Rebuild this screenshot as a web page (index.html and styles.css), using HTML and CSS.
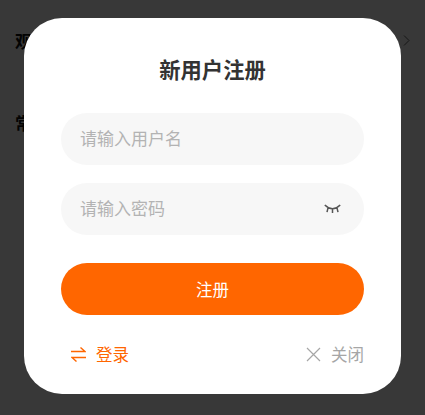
FILE: index.html
```html
<!DOCTYPE html>
<html lang="zh-CN">
<head>
    <meta charset="UTF-8">
    <meta name="viewport" content="width=device-width, initial-scale=1.0">
    <title>新用户注册</title>
    <link rel="stylesheet" href="styles.css">
</head>
<body>
    <div class="page">
        <div class="page-row">
            <span>观看历史</span>
            <svg class="chevron" width="7" height="11" viewBox="0 0 7 11"><path d="M1 .5l5 5-5 5" fill="none" stroke="#666" stroke-width="1"/></svg>
        </div>
        <div class="page-row">
            <span>常用功能</span>
        </div>
    </div>

    <div class="overlay">
        <div class="modal">
            <h1>新用户注册</h1>

            <div class="field">
                <span class="placeholder">请输入用户名</span>
            </div>

            <div class="field">
                <span class="placeholder">请输入密码</span>
                <svg class="eye" width="17" height="10" viewBox="0 0 17 10">
                    <path d="M.8 1Q8.500 8.500 16.200 1M4 3.800L3 8.200M8.500 5V9M13 3.800L14 8.200" fill="none" stroke="#555" stroke-width="1.500"/>
                </svg>
            </div>

            <button class="submit-btn">注册</button>

            <div class="actions">
                <div class="action login">
                    <svg width="15" height="15" viewBox="0 0 15 15">
                        <path d="M0 4.500H14L9.500 .5M15 10.500H1L5.500 14.500" fill="none" stroke="#ff6600" stroke-width="1.400"/>
                    </svg>
                    <span>登录</span>
                </div>
                <div class="action close">
                    <svg width="15" height="15" viewBox="0 0 15 15">
                        <path d="M1 1L14 14M14 1L1 14" fill="none" stroke="#a6a6a6" stroke-width="1.200"/>
                    </svg>
                    <span>关闭</span>
                </div>
            </div>
        </div>
    </div>
</body>
</html>
```

FILE: styles.css
```css
* {
    box-sizing: border-box;
}

body {
    margin: 0;
    height: 415px;
    overflow: hidden;
    font-family: "Noto Sans CJK SC", "Noto Sans", sans-serif;
    background-color: #fff;
}

.page {
    padding: 25px 15px 0;
}

.page-row {
    display: flex;
    justify-content: space-between;
    align-items: center;
    height: 30px;
    margin-bottom: 52px;
    font-size: 17px;
    font-weight: 700;
    color: #111;
}

.overlay {
    position: absolute;
    top: 0;
    left: 0;
    width: 425px;
    height: 415px;
    background-color: rgba(0, 0, 0, 0.78);
    padding: 18px 24px 21px;
}

.modal {
    width: 377px;
    height: 376px;
    background-color: #fff;
    border-radius: 38px;
    padding: 35px 37px 0;
}

h1 {
    margin: 0 0 28px;
    height: 32px;
    line-height: 32px;
    font-size: 21.300px;
    font-weight: 700;
    text-align: center;
    color: #333;
}

.field {
    display: flex;
    justify-content: space-between;
    align-items: center;
    height: 52px;
    margin-bottom: 18px;
    padding: 0 23px 0 19px;
    border-radius: 26px;
    background-color: #f7f7f7;
}

.placeholder {
    margin-top: -3px;
    font-size: 17px;
    color: #b3b3b3;
}

.submit-btn {
    display: block;
    width: 100%;
    height: 52px;
    margin-top: 28px;
    border: none;
    border-radius: 26px;
    background-color: #ff6600;
    color: #fff;
    font-family: inherit;
    font-size: 16.500px;
}

.actions {
    display: flex;
    justify-content: space-between;
    align-items: center;
    margin-top: 27px;
    padding-left: 10px;
}

.action {
    display: flex;
    align-items: center;
    gap: 10px;
    font-size: 16.500px;
}

.login {
    color: #ff6600;
}

.close {
    color: #a6a6a6;
}
```
